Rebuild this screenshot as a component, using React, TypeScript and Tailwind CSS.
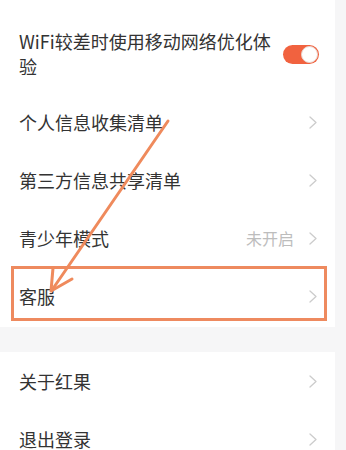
const font = { fontFamily: '"Noto Sans CJK SC", "Noto Sans", sans-serif' }

type Row = { label: string; value?: string }

const groupA: Row[] = [
  { label: '个人信息收集清单' },
  { label: '第三方信息共享清单' },
  { label: '青少年模式', value: '未开启' },
  { label: '客服' },
]

const groupB: Row[] = [{ label: '关于红果' }, { label: '退出登录' }]

function Chevron() {
  return (
    <svg width="10" height="15" viewBox="0 0 10 15" fill="none">
      <path d="M2 2 L8 7.5 L2 13" stroke="#cccccc" strokeWidth="1.3" strokeLinecap="round" strokeLinejoin="round" />
    </svg>
  )
}

function SettingRow({ row }: { row: Row }) {
  return (
    <div className="flex h-[58px] items-center justify-between pl-[19px] pr-[17px]">
      <span className="text-[18px] text-[#333333]">{row.label}</span>
      <div className="flex items-center gap-[14px]">
        {row.value && <span className="text-[16px] text-[#bdbdbd]">{row.value}</span>}
        <Chevron />
      </div>
    </div>
  )
}

export default function App() {
  return (
    <div className="relative h-[450px] w-[346px] overflow-hidden bg-[#f6f6f7]" style={font}>
      <div className="w-[335px] bg-white pt-[15px]">
        <div className="flex h-[78px] items-center justify-between pl-[19px] pr-[16px]">
          <p className="text-[18px] leading-[25px] text-[#333333]">
            WiFi较差时使用移动网络优化体
            <br />
            验
          </p>
          <div className="flex h-[19px] w-[36px] items-center justify-end rounded-full bg-[#f1623f] p-[1px]">
            <div className="h-[17px] w-[17px] rounded-full border border-[#e8d6d0] bg-white" />
          </div>
        </div>
        {groupA.map((row) => (
          <SettingRow key={row.label} row={row} />
        ))}
        <div className="h-[2px]" />
      </div>
      <div className="h-[25px]" />
      <div className="w-[335px] bg-white">
        {groupB.map((row) => (
          <SettingRow key={row.label} row={row} />
        ))}
      </div>

      <div className="absolute left-[11px] top-[266px] h-[55px] w-[316px] border-[3px] border-[#ee8a5f]" />
      <svg className="absolute left-0 top-0" width="346" height="450" viewBox="0 0 346 450" fill="none">
        <path d="M168 121 L52 290" stroke="#ef8a5c" strokeWidth="3" strokeLinecap="round" />
        <path d="M53 268 L51 291 L72 279" stroke="#ef8a5c" strokeWidth="3" strokeLinecap="round" strokeLinejoin="round" />
      </svg>
    </div>
  )
}
